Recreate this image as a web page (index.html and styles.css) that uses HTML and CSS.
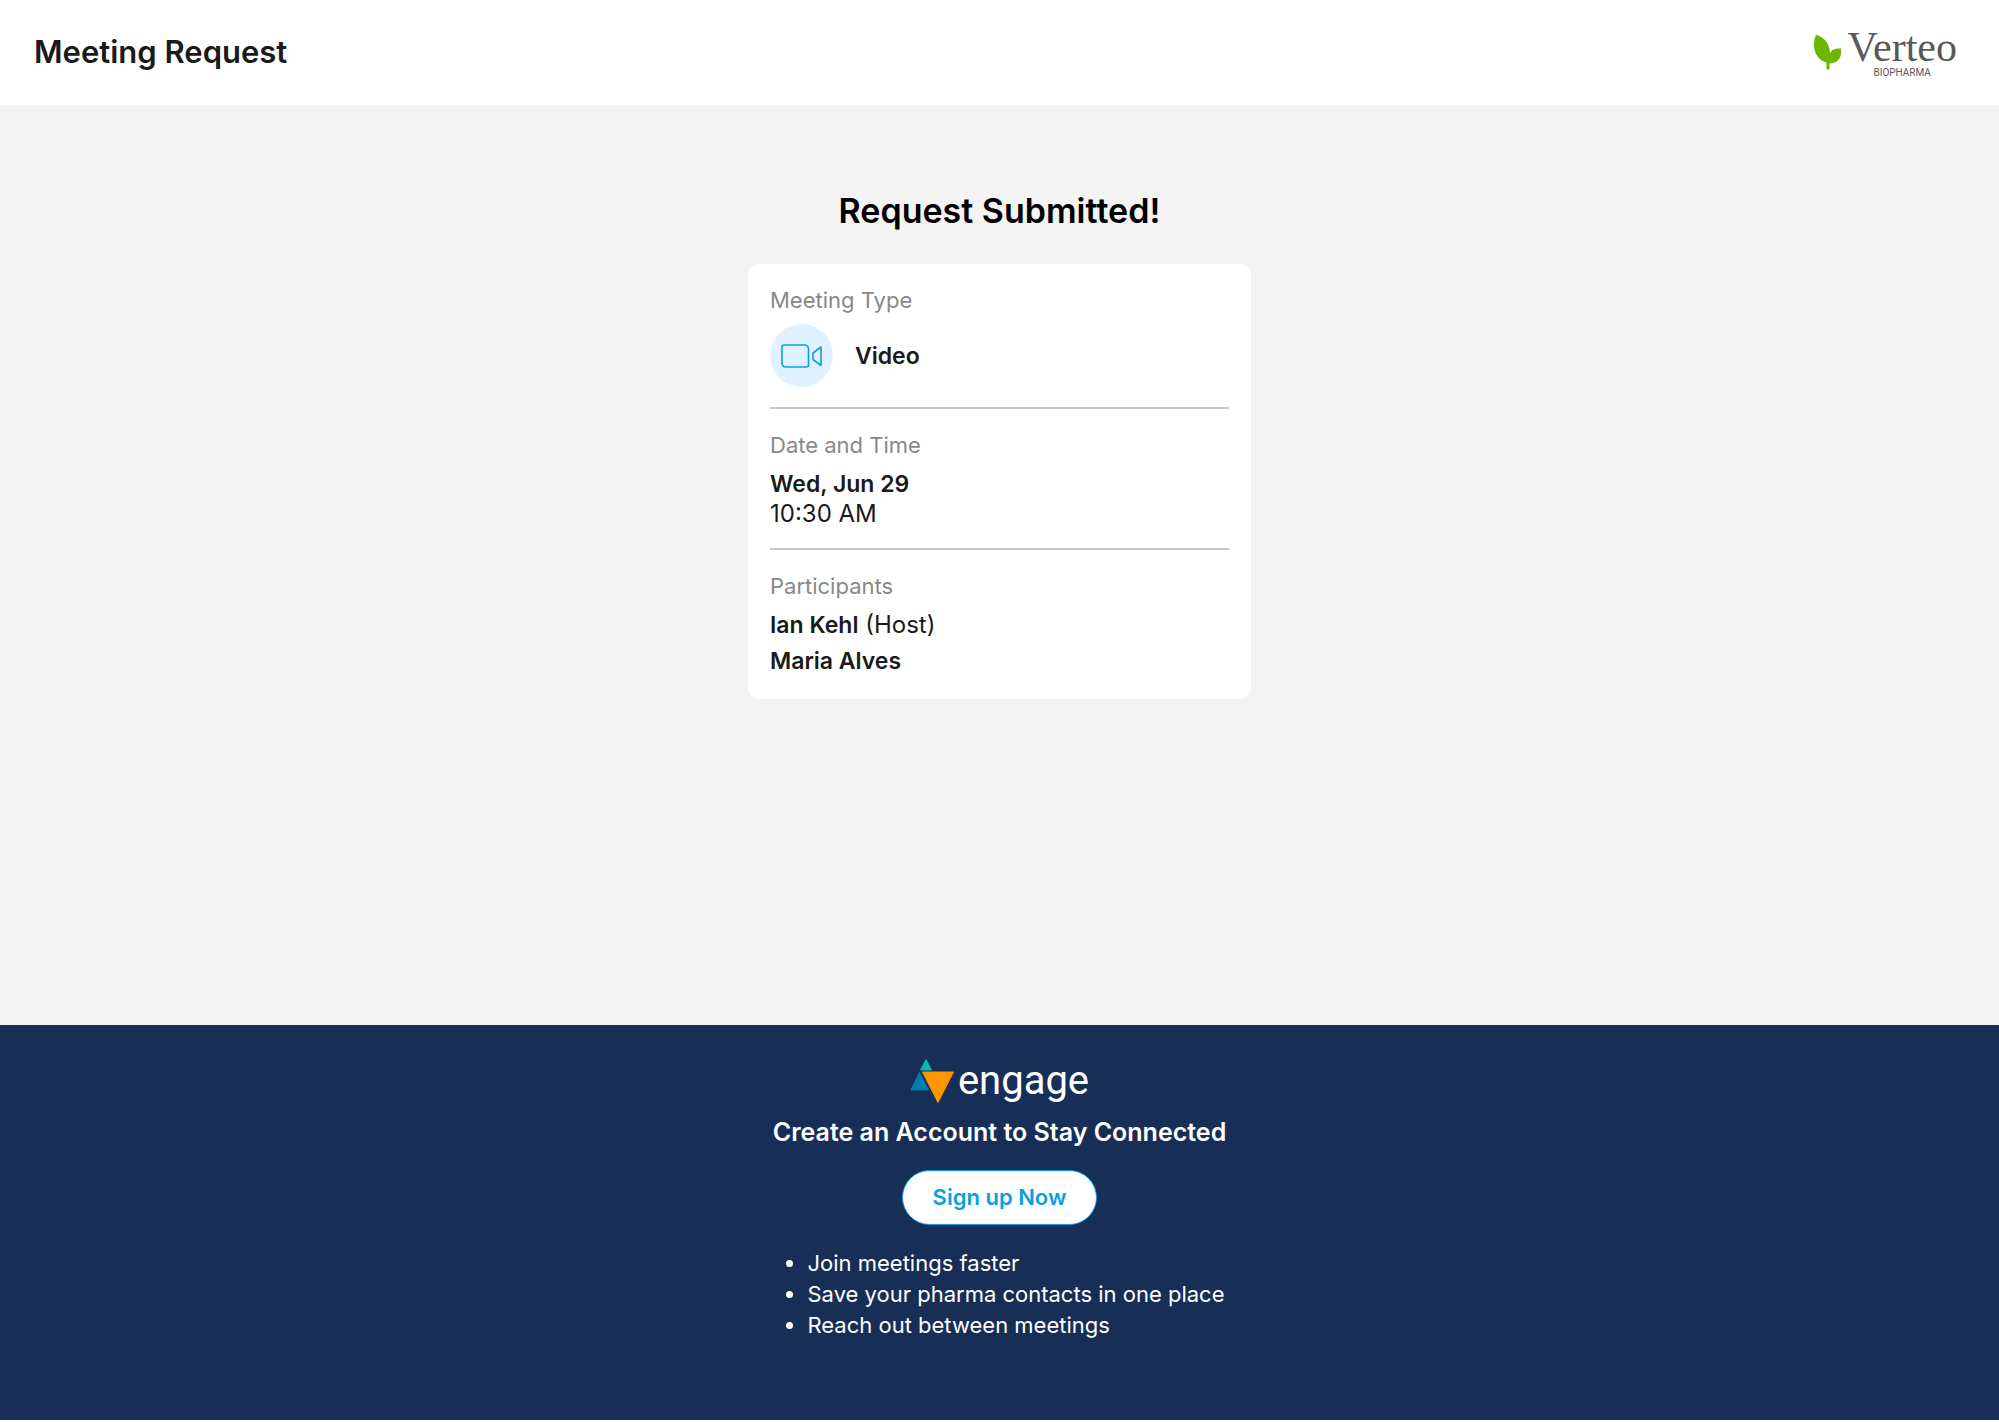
FILE: index.html
```html
<!DOCTYPE html>
<html lang="en">
<head>
<meta charset="utf-8">
<meta name="viewport" content="width=device-width, initial-scale=1">
<title>Meeting Request</title>
<link rel="stylesheet" href="styles.css">
</head>
<body>
<header class="topbar">
  <h1 class="topbar-title">Meeting Request</h1>
  <div class="brand">
    <svg class="brand-leaf" viewBox="0 0 28 39" aria-hidden="true">
      <path fill="#6cb800" d="M3 0C9 1 17 7 17 18.500C18 15 22 13 28 13.500C29 20 27 28 16.500 28.500V34.500H13.500V27.500C5 26 -3 14 3 0Z"/>
    </svg>
    <div class="brand-text">
      <span class="brand-name">Verteo</span>
      <span class="brand-sub">BIOPHARMA</span>
    </div>
  </div>
</header>

<main class="content">
  <h2 class="content-title">Request Submitted!</h2>
  <div class="card">
    <section class="card-section">
      <h3 class="label">Meeting Type</h3>
      <div class="type-row">
        <span class="type-icon">
          <svg viewBox="0 0 42 24" width="42" height="24" fill="none" stroke="#0b9fe0" stroke-width="1.600" aria-hidden="true">
            <path d="M3 1H23Q27.500 1 27.500 5V21Q27.500 23 25.500 23H5Q1 23 1 19V3Q1 1 3 1Z"/>
            <path d="M40 3V21.500L32 15.500V9Z" stroke-linejoin="round"/>
          </svg>
        </span>
        <strong class="value-strong">Video</strong>
      </div>
    </section>
    <section class="card-section">
      <h3 class="label">Date and Time</h3>
      <p class="value"><strong class="value-strong">Wed, Jun 29</strong></p>
      <p class="value">10:30 AM</p>
    </section>
    <section class="card-section">
      <h3 class="label">Participants</h3>
      <ul class="people">
        <li class="value"><strong class="value-strong">Ian Kehl</strong> (Host)</li>
        <li class="value"><strong class="value-strong">Maria Alves</strong></li>
      </ul>
    </section>
  </div>
</main>

<footer class="promo">
  <div class="engage">
    <svg class="engage-mark" viewBox="0 0 45 45" aria-hidden="true">
      <path fill="#00b8b8" stroke="#00b8b8" stroke-width="1" stroke-linejoin="round" d="M16 1.500L21.500 12H10.500Z"/>
      <path fill="#007cb0" stroke="#007cb0" stroke-width="1" stroke-linejoin="round" d="M9.500 14.500L18.500 32H1Z"/>
      <path fill="#ff9500" stroke="#ff9500" stroke-width="1" stroke-linejoin="round" d="M12.500 14H43.500L28 44.500Z"/>
    </svg>
    <span class="engage-name">engage</span>
  </div>
  <h2 class="promo-title">Create an Account to Stay Connected</h2>
  <button class="signup" type="button">Sign up Now</button>
  <ul class="benefits">
    <li>Join meetings faster</li>
    <li>Save your pharma contacts in one place</li>
    <li>Reach out between meetings</li>
  </ul>
</footer>
</body>
</html>
```

FILE: styles.css
```css
* {
  box-sizing: border-box;
}

body {
  margin: 0;
  min-height: 100vh;
  display: flex;
  flex-direction: column;
  background: #fff;
  color: #1a1a1a;
  font-family: Inter, "Liberation Sans", sans-serif;
}

h1, h2, h3, p, ul {
  margin: 0;
}

/* Top bar */
.topbar {
  display: flex;
  align-items: flex-start;
  justify-content: space-between;
  padding: 29px 42px 26px 34px;
}

.topbar-title {
  font-size: 31px;
  line-height: 46px;
  font-weight: 600;
}

.brand {
  display: flex;
  align-items: center;
  gap: 6px;
}

.brand-leaf {
  width: 28px;
  height: 39px;
}

.brand-text {
  display: flex;
  flex-direction: column;
  align-items: center;
  color: #58595b;
}

.brand-name {
  font-family: "Liberation Serif", serif;
  font-size: 42px;
  line-height: 37px;
}

.brand-sub {
  font-family: Roboto, sans-serif;
  font-size: 10px;
  line-height: 13px;
}

/* Confirmation */
.content {
  flex: 1;
  display: flex;
  flex-direction: column;
  align-items: center;
  gap: 32px;
  padding: 84px 24px;
  background: #f3f3f3;
}

.content-title {
  color: #000;
  font-size: 34px;
  line-height: 43px;
  font-weight: 600;
}

.card {
  width: 100%;
  max-width: 503px;
  padding: 0 22px 3px;
  background: #fff;
  border-radius: 11px;
}

.card-section {
  padding: 21px 0 20px;
}

.card-section + .card-section {
  border-top: 2px solid #c6c6c6;
}

.label {
  margin-bottom: 9px;
  color: #888;
  font-size: 22px;
  line-height: 30px;
  font-weight: 400;
}

.value {
  font-size: 24px;
  line-height: 29px;
}

.value-strong {
  font-size: 23px;
  font-weight: 600;
}

.type-row {
  display: flex;
  align-items: center;
  gap: 22px;
}

.type-icon {
  display: flex;
  align-items: center;
  justify-content: center;
  width: 63px;
  height: 63px;
  border-radius: 50%;
  background: #e0f1ff;
}

.people {
  display: grid;
  gap: 6px;
  padding: 0;
  list-style: none;
}

/* Sign-up footer */
.promo {
  display: flex;
  flex-direction: column;
  align-items: center;
  margin-bottom: 2px;
  padding: 33px 24px 79px;
  background: #172f57;
  color: #fff;
}

.engage {
  display: flex;
  align-items: center;
  gap: 3px;
}

.engage-mark {
  width: 45px;
  height: 45px;
}

.engage-name {
  font-family: Roboto, sans-serif;
  font-size: 40px;
  line-height: 45px;
}

.promo-title {
  margin: 13px 0 22px;
  font-size: 25px;
  line-height: 32px;
  font-weight: 600;
}

.signup {
  padding: 12px 30px;
  border: 1px solid #0b9fe0;
  border-radius: 28px;
  background: #fff;
  color: #0b9fe0;
  font-family: inherit;
  font-size: 22px;
  line-height: 29px;
  font-weight: 600;
}

.benefits {
  margin-top: 23px;
  padding-left: 33px;
  font-size: 22px;
  line-height: 31px;
}
```
